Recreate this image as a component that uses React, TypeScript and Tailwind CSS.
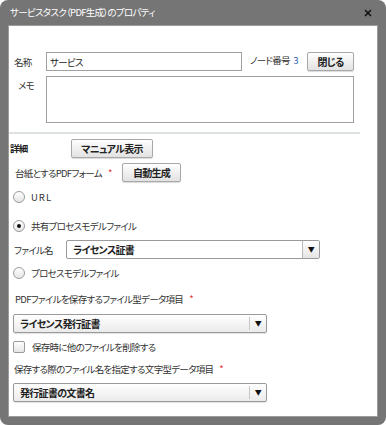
import { X } from "lucide-react";

const font = "font-['Noto_Sans_CJK_JP','Noto_Sans',sans-serif] [font-feature-settings:'palt'] tracking-[-0.7px] whitespace-nowrap";

function Btn({ label, className = "" }: { label: string; className?: string }) {
  return (
    <button
      className={`h-[19px] rounded-[2px] border border-[#a8a8a8] bg-gradient-to-b from-white to-[#e2e2e2] text-[10px] leading-[17px] font-bold text-[#222] shadow-[0_1px_1px_rgba(0,0,0,0.15)] ${className}`}
    >
      {label}
    </button>
  );
}

function Radio({ checked = false }: { checked?: boolean }) {
  return (
    <span className="grid place-items-center w-[12px] h-[12px] rounded-full border border-[#9a9a9a] bg-gradient-to-b from-white to-[#e6e6e6]">
      {checked && <span className="w-[4px] h-[4px] rounded-full bg-[#111]" />}
    </span>
  );
}

function Select({ value, className = "" }: { value: string; className?: string }) {
  return (
    <div
      className={`flex h-[19px] items-center rounded-[2px] border border-[#9a9a9a] bg-gradient-to-b from-white to-[#ebebeb] shadow-[0_1px_1px_rgba(0,0,0,0.12)] ${className}`}
    >
      <span className="flex-1 pl-[6px] text-[10px] leading-[17px] font-bold text-[#222]">{value}</span>
      <span className="h-[13px] w-px bg-[#c8c8c8]" />
      <span className="w-[16px] text-center text-[7px] leading-[17px] text-[#111]">▼</span>
    </div>
  );
}

function Req() {
  return <span className="ml-[6px] text-[#e03030]">*</span>;
}

export default function App() {
  return (
    <div className={`w-[386px] h-[425px] bg-[#757575] rounded-[8px] flex flex-col px-[8px] pb-[8px] ${font}`}>
      <div className="h-[25px] flex items-center justify-between pl-[2px] pr-[5px]">
        <span className="text-[9.5px] text-white">サービスタスク（PDF生成）のプロパティ</span>
        <X className="w-[10px] h-[10px] text-[#111]" strokeWidth={4} />
      </div>
      <div className="flex-1 bg-white border border-[#9c9c9c] text-[9.5px] leading-[12px] text-[#333]">
        <div className="mt-[26px] flex items-center h-[19px]">
          <span className="w-[37px] pl-[5px]">名称</span>
          <div className="w-[196px] h-[19px] border border-[#a0a0a0] flex items-center pl-[3px] text-[#222]">サービス</div>
          <span className="ml-[8px] -mt-[3px] text-[#333]">
            ノード番号 <span className="ml-[2px] text-[#2a5bb0]">3</span>
          </span>
          <Btn label="閉じる" className="ml-auto mr-[23px] w-[47px]" />
        </div>
        <div className="mt-[5px] flex">
          <span className="w-[37px] pl-[9px] pt-[3px]">メモ</span>
          <div className="w-[308px] h-[47px] border border-[#a0a0a0]" />
        </div>
        <div className="mt-[9px] h-[2px] w-[351px] bg-[#dde1e1]" />
        <div className="mt-[5px] flex items-start">
          <span className="w-[62px] pl-[1px] pt-[3px] font-bold text-[#222]">詳細</span>
          <Btn label="マニュアル表示" className="w-[82px]" />
        </div>
        <div className="mt-[5px] flex items-center">
          <span className="w-[113px] flex-none pl-[6px]">
            台紙とするPDFフォーム<Req />
          </span>
          <Btn label="自動生成" className="w-[59px]" />
        </div>
        <div className="mt-[9px] flex items-center gap-[6px] pl-[4px] h-[12px]">
          <Radio />
          <span className="tracking-[1px]">URL</span>
        </div>
        <div className="mt-[17px] flex items-center gap-[6px] pl-[4px] h-[12px]">
          <Radio checked />
          <span>共有プロセスモデルファイル</span>
        </div>
        <div className="mt-[8px] flex items-center">
          <span className="w-[57px] pl-[5px]">ファイル名</span>
          <div className="w-[254px] h-[19px] flex border border-[#9a9a9a] rounded-[2px]">
            <span className="flex-1 pl-[6px] text-[10px] font-bold text-[#222] leading-[17px]">ライセンス証書</span>
            <span className="w-[17px] border-l border-[#b8b8b8] bg-gradient-to-b from-white to-[#e4e4e4] text-center text-[7px] leading-[17px] text-[#111]">▼</span>
          </div>
        </div>
        <div className="mt-[8px] flex items-center gap-[6px] pl-[4px] h-[12px]">
          <Radio />
          <span>プロセスモデルファイル</span>
        </div>
        <div className="mt-[14px] pl-[6px] h-[12px]">
          PDFファイルを保存するファイル型データ項目<Req />
        </div>
        <Select value="ライセンス発行証書" className="mt-[9px] ml-[4px] w-[254px]" />
        <div className="mt-[8px] flex items-center gap-[7px] pl-[4px] h-[12px]">
          <span className="w-[12px] h-[12px] rounded-[2px] border border-[#9a9a9a] bg-gradient-to-b from-white to-[#e6e6e6]" />
          <span>保存時に他のファイルを削除する</span>
        </div>
        <div className="mt-[10px] pl-[5px] h-[12px]">
          保存する際のファイル名を指定する文字型データ項目<Req />
        </div>
        <Select value="発行証書の文書名" className="mt-[8px] ml-[4px] w-[254px]" />
      </div>
    </div>
  );
}
